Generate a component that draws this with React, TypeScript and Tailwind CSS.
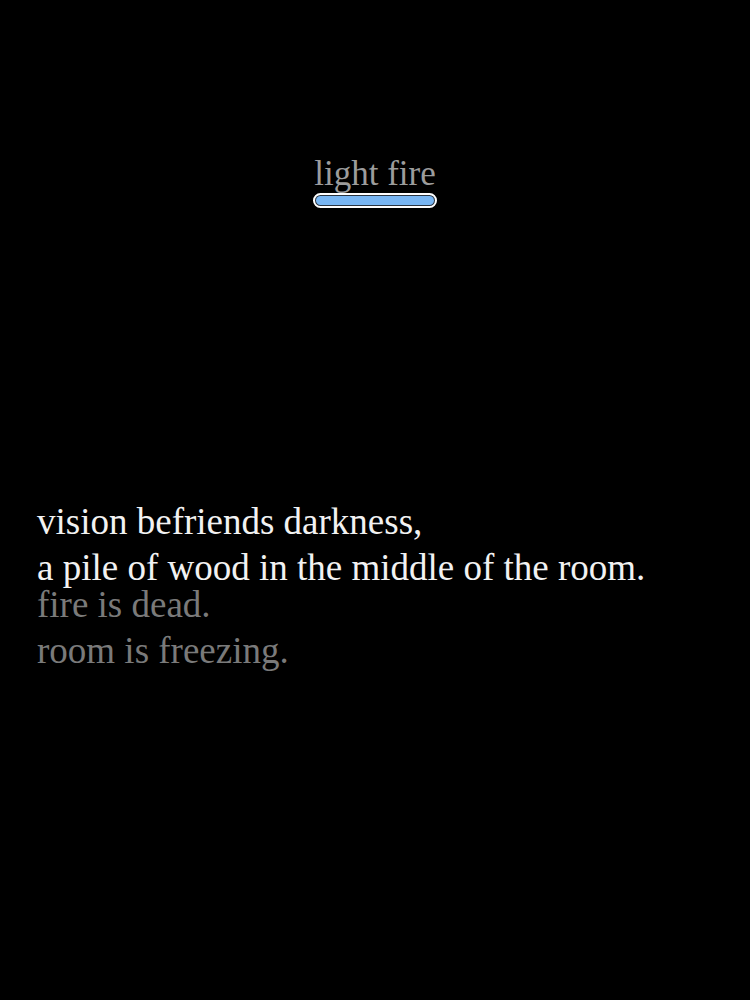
import React from "react";

export default function App() {
  const serif = { fontFamily: '"Liberation Serif", "Times New Roman", serif' };
  return (
    <div className="w-full h-[1000px] bg-black overflow-hidden" style={serif}>
      <div className="flex flex-col items-center pt-[154px]">
        <div className="text-[35px] leading-[40px] text-[#9c9c9c]">light fire</div>
        <div className="mt-[-1px] w-[124px] h-[15px] rounded-full border-2 border-white bg-[#2a3440] p-[1px]">
          <div className="h-full w-full rounded-full bg-[#78b6f3]" />
        </div>
      </div>
      <div className="pl-[37px] mt-[291px]">
        <div className="text-[37px] leading-[46px] text-[#f2f2f2]">
          <div>vision befriends darkness,</div>
          <div>a pile of wood in the middle of the room.</div>
        </div>
        <div className="mt-[-9px] text-[37px] leading-[46px] text-[#7a7a7a]">
          <div>fire is dead.</div>
          <div>room is freezing.</div>
        </div>
      </div>
    </div>
  );
}
